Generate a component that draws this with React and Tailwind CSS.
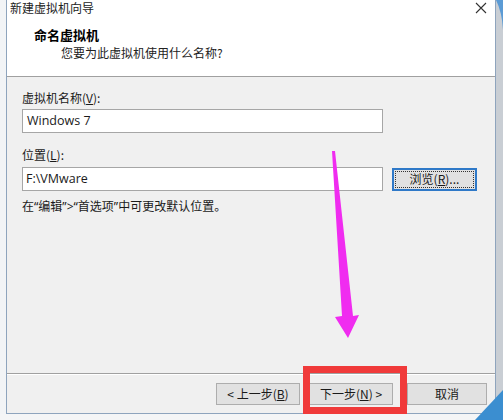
const cjk = { fontFamily: '"Microsoft YaHei", "Noto Sans CJK SC", "Noto Sans", sans-serif' };
const latin = { fontFamily: '"Open Sans", "Noto Sans", sans-serif' };

function Btn({ children, className = '' }) {
  return (
    <div className={`flex h-[22px] items-center justify-center border border-[#adadad] bg-[#e1e1e1] text-[12px] text-[#1a1a1a] ${className}`}>
      {children}
    </div>
  );
}

function Q({ children }) {
  return <span style={{ fontFamily: '"Noto Sans", sans-serif' }}>{children}</span>;
}

export default function App() {
  return (
    <div className="relative h-[420px] w-[503px] overflow-hidden bg-[#f4f5f6]" style={cjk}>
      <div className="flex">
        <div className="w-[6px] bg-[#f2f4f6]" />
        {/* dialog window */}
        <div className="flex h-[414px] w-[490px] flex-col border-x border-b border-[#8ea4bd] bg-[#f0f0f0]">
          {/* title + header */}
          <div className="relative h-[77px] shrink-0 border-b border-[#a0a0a0] bg-white">
            <div className="pl-[3px] text-[12px] leading-[15px] text-[#222]">新建虚拟机向导</div>
            <svg className="absolute right-[8px] top-[2px] h-[12px] w-[12px]" viewBox="0 0 12 12">
              <path d="M1 1 L11 11 M11 1 L1 11" stroke="#333" strokeWidth="1.1" />
            </svg>
            <div className="pl-[27px] pt-[11px] text-[13px] font-bold leading-[17px] text-black">命名虚拟机</div>
            <div className="pl-[54px] pt-[2px] text-[12px] leading-[16px] text-[#222]">您要为此虚拟机使用什么名称?</div>
          </div>

          {/* body */}
          <div className="flex flex-1 flex-col px-[15px] pt-[13px] text-[12px] text-[#1a1a1a]">
            <div className="leading-[16px]">虚拟机名称(<span className="underline">V</span>):</div>
            <div className="mt-[3px] flex h-[24px] w-[361px] items-center border border-[#a6a6a6] bg-white px-[4px] text-[12.5px]" style={latin}>
              Windows 7
            </div>
            <div className="mt-[14px] leading-[16px]">位置(<span className="underline">L</span>):</div>
            <div className="mt-[4px] flex items-center gap-[9px]">
              <div className="flex h-[24px] w-[361px] items-center border border-[#a6a6a6] bg-white px-[3px] text-[12.5px]" style={latin}>
                F:\VMware
              </div>
              <div className="flex h-[23px] w-[85px] items-center justify-center border-2 border-[#2f79c8] bg-[#e1e1e1] p-[1px]">
                <div className="flex h-full w-full items-center justify-center border border-dotted border-[#333] text-[12px]">
                  浏览(<span className="underline">R</span>)...
                </div>
              </div>
            </div>
            <div className="mt-[7px] leading-[16px]">
              在<Q>“</Q>编辑<Q>”&gt;“</Q>首选项<Q>”</Q>中可更改默认位置。
            </div>
          </div>

          {/* footer */}
          <div className="h-[40px] shrink-0 border-t border-[#a0a0a0]">
            <div className="flex border-t border-white pl-[209px] pt-[8px]">
              <Btn className="w-[84px]">&lt; 上一步(<span className="underline">B</span>)</Btn>
              <Btn className="ml-[9px] w-[84px]">下一步(<span className="underline">N</span>) &gt;</Btn>
              <Btn className="ml-[14px] w-[80px]">取消</Btn>
            </div>
          </div>
        </div>
        <div className="flex-1 bg-[#c9ced4]" />
      </div>

      {/* desktop bits at right edge */}
      <svg className="absolute right-0 top-0 h-[40px] w-[7px]" viewBox="0 0 7 40">
        <path d="M0 0 Q6 12 7 30 L7 0 Z" fill="#5b9bd5" />
      </svg>
      <svg className="absolute bottom-0 right-0 h-[30px] w-[40px]" viewBox="0 0 40 30">
        <path d="M40 0 L40 30 L12 30 Z" fill="#3b8ed0" />
      </svg>

      {/* red highlight rectangle */}
      <div className="absolute left-[303px] top-[366px] h-[48px] w-[104px] border-[7px] border-[#f03a3a]" />

      {/* magenta arrow */}
      <svg className="absolute left-0 top-0 h-[420px] w-[503px]" viewBox="0 0 503 420">
        <polygon points="332,151 335,151 353,316 359,315 348,338 335,317 342,316" fill="#f02cf0" />
      </svg>
    </div>
  );
}
